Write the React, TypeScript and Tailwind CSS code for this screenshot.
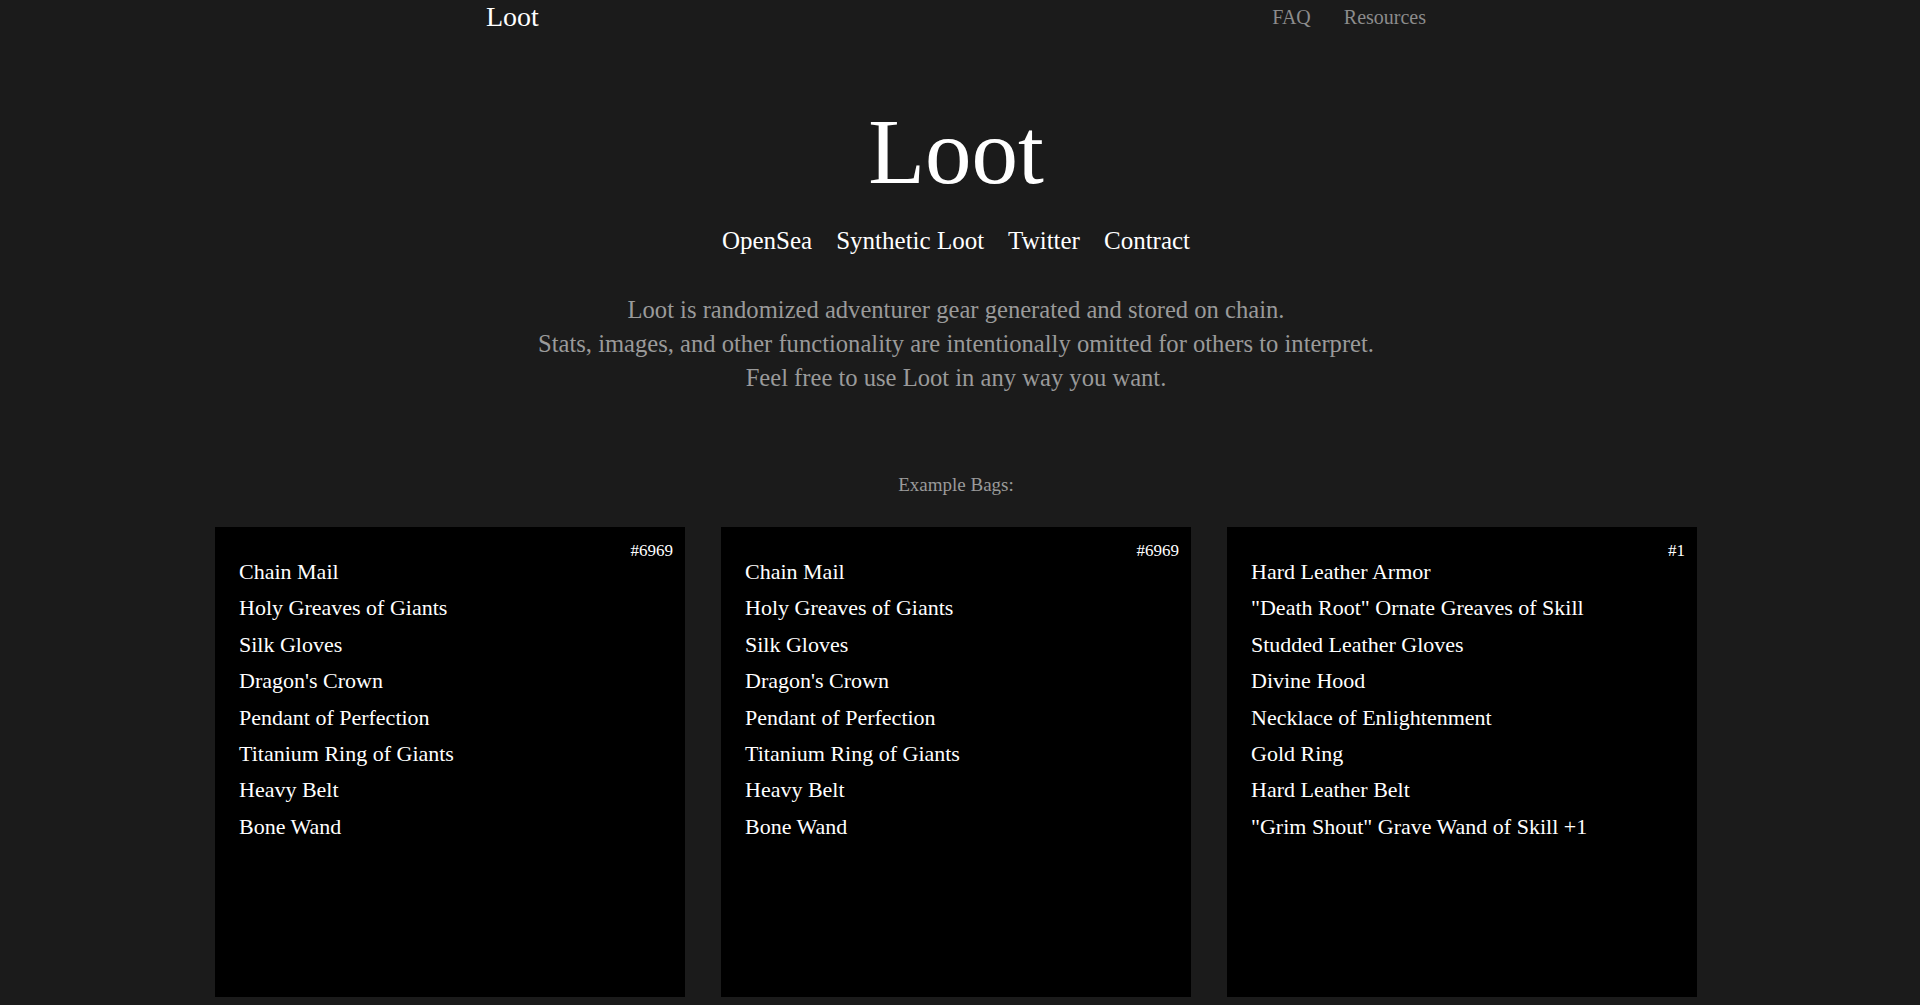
import React from 'react';

type Bag = {
  id: string;
  items: string[];
};

const bags: Bag[] = [
  {
    id: '#6969',
    items: [
      'Chain Mail',
      'Holy Greaves of Giants',
      'Silk Gloves',
      "Dragon's Crown",
      'Pendant of Perfection',
      'Titanium Ring of Giants',
      'Heavy Belt',
      'Bone Wand',
    ],
  },
  {
    id: '#6969',
    items: [
      'Chain Mail',
      'Holy Greaves of Giants',
      'Silk Gloves',
      "Dragon's Crown",
      'Pendant of Perfection',
      'Titanium Ring of Giants',
      'Heavy Belt',
      'Bone Wand',
    ],
  },
  {
    id: '#1',
    items: [
      'Hard Leather Armor',
      '"Death Root" Ornate Greaves of Skill',
      'Studded Leather Gloves',
      'Divine Hood',
      'Necklace of Enlightenment',
      'Gold Ring',
      'Hard Leather Belt',
      '"Grim Shout" Grave Wand of Skill +1',
    ],
  },
];

const links = ['OpenSea', 'Synthetic Loot', 'Twitter', 'Contract'];

function BagCard({ bag }: { bag: Bag }) {
  return (
    <div className="relative h-[470px] w-[470px] bg-black pl-6 pt-[27px] text-white">
      <span className="absolute right-3 top-[12px] text-[17px] leading-6">{bag.id}</span>
      <ul className="text-[22px] leading-[36.4px]">
        {bag.items.map((item, i) => (
          <li key={i}>{item}</li>
        ))}
      </ul>
    </div>
  );
}

export default function App() {
  return (
    <div className="min-h-screen bg-[#1b1b1b] font-['Liberation_Serif',serif] text-white">
      <div className="mr-2 flex flex-col items-center">
        <header className="flex h-[34px] w-[940px] items-center justify-between">
          <a href="#" className="text-[28px] leading-7 text-white">Loot</a>
          <nav className="flex gap-[33px] text-[20px] leading-5 text-[#8c8c8c]">
            <a href="#">FAQ</a>
            <a href="#">Resources</a>
          </nav>
        </header>

        <h1 className="mt-[71px] text-[93px] leading-none">Loot</h1>

        <div className="mt-[30px] flex gap-6 text-[25px] leading-none">
          {links.map((link) => (
            <a key={link} href="#">{link}</a>
          ))}
        </div>

        <div className="mt-[40px] text-center text-[24.6px] leading-[34px] text-[#9a9a9a]">
          <p>Loot is randomized adventurer gear generated and stored on chain.</p>
          <p>Stats, images, and other functionality are intentionally omitted for others to interpret.</p>
          <p>Feel free to use Loot in any way you want.</p>
        </div>

        <p className="mt-[80px] text-[19px] leading-none text-[#9a9a9a]">Example Bags:</p>

        <div className="mt-[33px] flex gap-9">
          {bags.map((bag, i) => (
            <BagCard key={i} bag={bag} />
          ))}
        </div>
      </div>
    </div>
  );
}
